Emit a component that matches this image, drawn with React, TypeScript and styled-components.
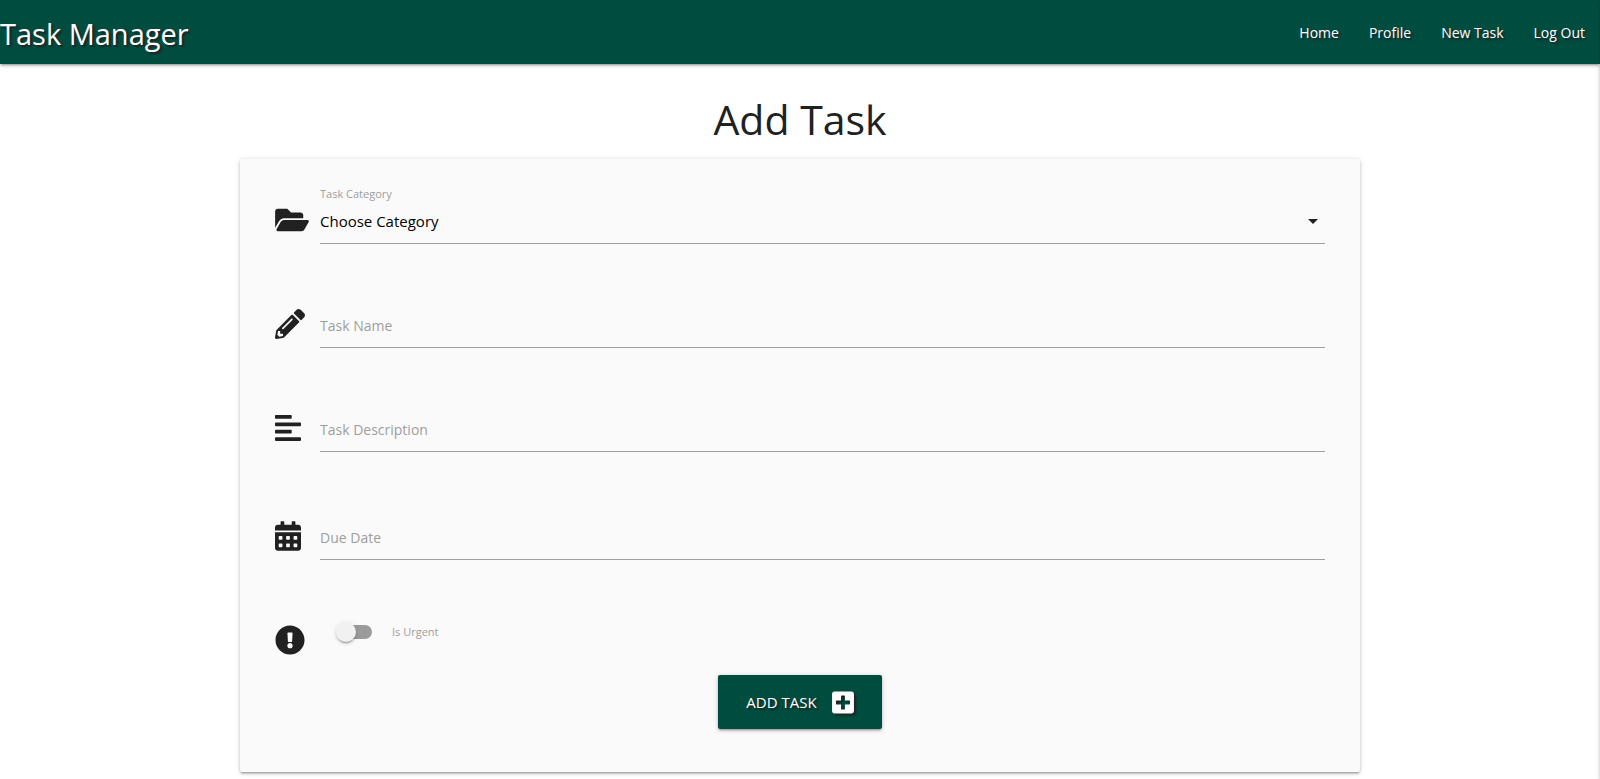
import React from 'react';
import styled, { createGlobalStyle } from 'styled-components';
import {
  FaAlignLeft,
  FaCalendarAlt,
  FaExclamationCircle,
  FaFolderOpen,
  FaPencilAlt,
  FaPlusSquare,
} from 'react-icons/fa';

const green = '#004d40';
const ink = '#212121';
const muted = '#9e9e9e';
const raised =
  '0 2px 2px 0 rgba(0,0,0,0.14), 0 3px 1px -2px rgba(0,0,0,0.12), 0 1px 5px 0 rgba(0,0,0,0.2)';

const GlobalStyle = createGlobalStyle`
  *, *::before, *::after { box-sizing: border-box; }
  body {
    margin: 0;
    background: #fff;
    color: ${ink};
    font-family: "Segoe UI", "Open Sans", "Noto Sans", sans-serif;
    font-size: 14px;
    line-height: 24px;
  }
  input, select, button { font: inherit; }
`;

const Navbar = styled.nav`
  display: flex;
  justify-content: space-between;
  height: 64px;
  background: ${green};
  box-shadow: ${raised};
  line-height: 66px;
  text-shadow: 2px 2px 2px ${ink};
`;

const Brand = styled.a`
  color: #fff;
  font-size: 29px;
  line-height: 68px;
  text-decoration: none;
`;

const NavList = styled.ul`
  display: flex;
  margin: 0;
  padding: 0;
  list-style: none;
`;

const NavLink = styled.a`
  display: block;
  padding: 0 15px;
  color: #fff;
  text-decoration: none;
`;

const SideNav = styled.aside`
  position: fixed;
  top: 0;
  right: 0;
  width: 300px;
  height: 100%;
  background: #fff;
  box-shadow: ${raised};
  transform: translateX(100%);
`;

const Container = styled.main`
  width: 70%;
  margin: 0 auto;
  padding-bottom: 7px;
`;

const Title = styled.h1`
  margin: 0;
  padding: 31px 0 16px;
  font-size: 41px;
  font-weight: 400;
  line-height: 48px;
  text-align: center;
`;

const Card = styled.form`
  padding: 39px 35px 43px;
  border-radius: 2px;
  background: #fafafa;
  box-shadow: ${raised};
`;

const Field = styled.div<{ $gap?: number; $iconWidth?: number }>`
  display: grid;
  grid-template-columns: 45px 1fr;
  margin-bottom: ${({ $gap = 58 }) => $gap}px;

  > svg {
    width: ${({ $iconWidth = 30 }) => $iconWidth}px;
    height: 30px;
    margin-top: 7px;
  }
`;

const Control = styled.div`
  position: relative;
  display: grid;
  align-items: center;
  height: 46px;
  border-bottom: 1px solid ${muted};

  > * { grid-area: 1 / 1; }
`;

const TextInput = styled.input`
  width: 100%;
  height: 45px;
  padding: 0;
  border: 0;
  outline: 0;
  background: transparent;
  color: #000;
`;

const InputLabel = styled.label`
  padding-top: 2px;
  color: ${muted};
  pointer-events: none;

  ${TextInput}:not(:placeholder-shown) + & { visibility: hidden; }
`;

const SelectInput = styled.select`
  width: 100%;
  height: 45px;
  padding: 0;
  border: 0;
  outline: 0;
  appearance: none;
  background: transparent;
  color: #000;
  font-size: 15px;
`;

const FloatingLabel = styled.label`
  position: absolute;
  top: -16px;
  left: 0;
  color: ${muted};
  font-size: 11px;
  line-height: 24px;
`;

const Caret = styled.svg`
  justify-self: end;
  width: 24px;
  height: 24px;
  fill: ${ink};
  pointer-events: none;
`;

const SwitchLabel = styled.label`
  display: flex;
  align-items: center;
  gap: 20px;
  height: 28px;
  padding: 0 16px 0 18px;
  color: ${muted};
  font-size: 11px;
`;

const Lever = styled.input`
  position: relative;
  flex: none;
  width: 34px;
  height: 14px;
  margin: 0;
  appearance: none;
  border-radius: 15px;
  background: rgba(0, 0, 0, 0.38);

  &::before {
    content: '';
    position: absolute;
    top: -3px;
    left: -2px;
    width: 20px;
    height: 20px;
    border-radius: 50%;
    background: #f1f1f1;
    box-shadow: 0 3px 1px -2px rgba(0, 0, 0, 0.2), 0 2px 2px 0 rgba(0, 0, 0, 0.14),
      0 1px 5px 0 rgba(0, 0, 0, 0.12);
  }

  &:checked::before { left: 16px; }
`;

const SubmitButton = styled.button`
  display: flex;
  align-items: center;
  gap: 15px;
  height: 54px;
  margin: 0 auto;
  padding: 0 28px;
  border: 0;
  border-radius: 2px;
  background: ${green};
  box-shadow: ${raised};
  color: #fff;
  font-size: 15px;
  text-shadow: 2px 2px 2px ${ink};
  text-transform: uppercase;

  svg {
    width: 22px;
    height: 25px;
    filter: drop-shadow(2px 2px 1px ${ink});
  }
`;

const navItems = ['Home', 'Profile', 'New Task', 'Log Out'];

interface TextFieldProps {
  id: string;
  label: string;
  icon: React.ReactNode;
  iconWidth?: number;
  gap?: number;
}

function TextField({ id, label, icon, iconWidth, gap }: TextFieldProps) {
  return (
    <Field $gap={gap} $iconWidth={iconWidth}>
      {icon}
      <Control>
        <TextInput id={id} name={id} type="text" placeholder=" " />
        <InputLabel htmlFor={id}>{label}</InputLabel>
      </Control>
    </Field>
  );
}

export default function App() {
  return (
    <>
      <GlobalStyle />
      <Navbar>
        <Brand href="#">Task Manager</Brand>
        <NavList>
          {navItems.map((item) => (
            <li key={item}>
              <NavLink href="#">{item}</NavLink>
            </li>
          ))}
        </NavList>
      </Navbar>
      <SideNav aria-hidden="true" />
      <Container>
        <Title>Add Task</Title>
        <Card>
          <Field $iconWidth={34}>
            <FaFolderOpen />
            <Control>
              <SelectInput id="category" name="category" defaultValue="">
                <option value="">Choose Category</option>
              </SelectInput>
              <FloatingLabel htmlFor="category">Task Category</FloatingLabel>
              <Caret viewBox="0 0 24 24" aria-hidden="true">
                <path d="M7 10l5 5 5-5z" />
              </Caret>
            </Control>
          </Field>
          <TextField id="task_name" label="Task Name" icon={<FaPencilAlt />} />
          <TextField
            id="task_description"
            label="Task Description"
            icon={<FaAlignLeft />}
            iconWidth={26}
            gap={62}
          />
          <TextField id="due_date" label="Due Date" icon={<FaCalendarAlt />} iconWidth={26} />
          <Field $gap={20}>
            <FaExclamationCircle />
            <SwitchLabel>
              <Lever type="checkbox" name="is_urgent" />
              Is Urgent
            </SwitchLabel>
          </Field>
          <SubmitButton type="submit">
            Add Task
            <FaPlusSquare />
          </SubmitButton>
        </Card>
      </Container>
    </>
  );
}
